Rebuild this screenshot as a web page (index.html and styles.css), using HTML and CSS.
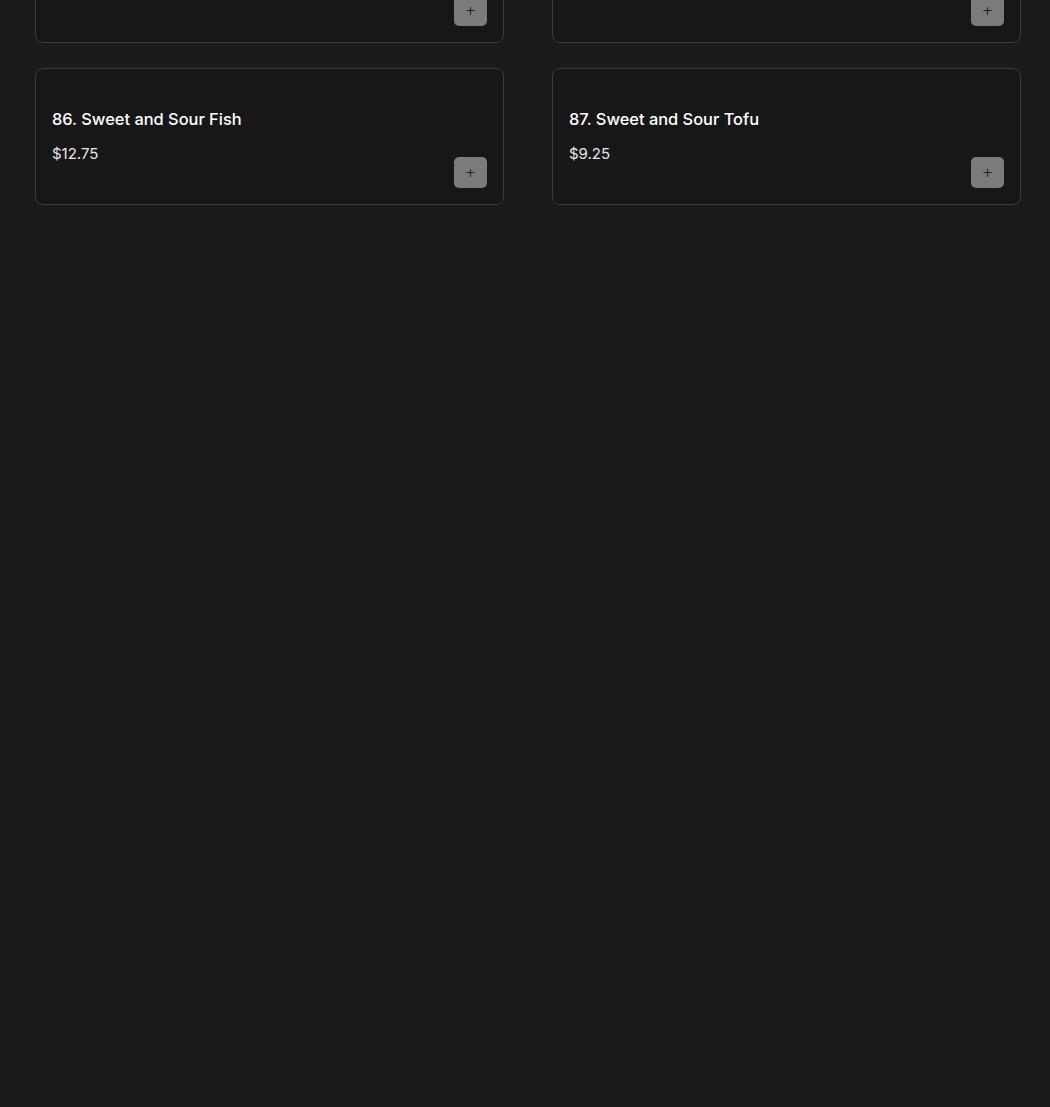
FILE: index.html
```html
<!DOCTYPE html>
<html lang="en">
<head>
    <meta charset="UTF-8">
    <meta name="viewport" content="width=device-width, initial-scale=1.0">
    <title>Menu</title>
    <link rel="stylesheet" href="styles.css">
</head>
<body>
    <div class="menu-grid">
        <div class="menu-item">
            <h3 class="item-name">84. Sweet and Sour Chicken</h3>
            <div class="item-price">$12.75</div>
            <button class="add-button" type="button">+</button>
        </div>
        <div class="menu-item">
            <h3 class="item-name">85. Sweet and Sour Pork</h3>
            <div class="item-price">$12.75</div>
            <button class="add-button" type="button">+</button>
        </div>
        <div class="menu-item">
            <h3 class="item-name">86. Sweet and Sour Fish</h3>
            <div class="item-price">$12.75</div>
            <button class="add-button" type="button">+</button>
        </div>
        <div class="menu-item">
            <h3 class="item-name">87. Sweet and Sour Tofu</h3>
            <div class="item-price">$9.25</div>
            <button class="add-button" type="button">+</button>
        </div>
    </div>
</body>
</html>
```

FILE: styles.css
```css
* {
    box-sizing: border-box;
}

body {
    margin: 0;
    background-color: #1b1b1b;
    font-family: Inter, "Open Sans", Arial, sans-serif;
    color: #ffffff;
    height: 100vh;
    overflow: hidden;
}

.menu-grid {
    display: grid;
    grid-template-columns: 469px 469px;
    column-gap: 48px;
    row-gap: 25px;
    padding: 0 0 0 35px;
    margin-top: -94px;
}

.menu-item {
    position: relative;
    height: 137px;
    background-color: #171717;
    border: 1px solid #3c3c3c;
    border-radius: 8px;
    padding: 38px 16px 0 16px;
}

.item-name {
    margin: 0;
    font-size: 16.4px;
    font-weight: 500;
    line-height: 24px;
}

.item-price {
    margin-top: 13px;
    font-size: 15px;
    line-height: 20px;
    color: #e6e6e6;
}

.add-button {
    position: absolute;
    right: 16px;
    bottom: 16px;
    width: 33px;
    height: 31px;
    padding: 0;
    border: none;
    border-radius: 5px;
    background-color: #7b7b7b;
    color: #222222;
    font-family: "DejaVu Sans", sans-serif;
    font-size: 13px;
    line-height: 31px;
    cursor: pointer;
}
```
